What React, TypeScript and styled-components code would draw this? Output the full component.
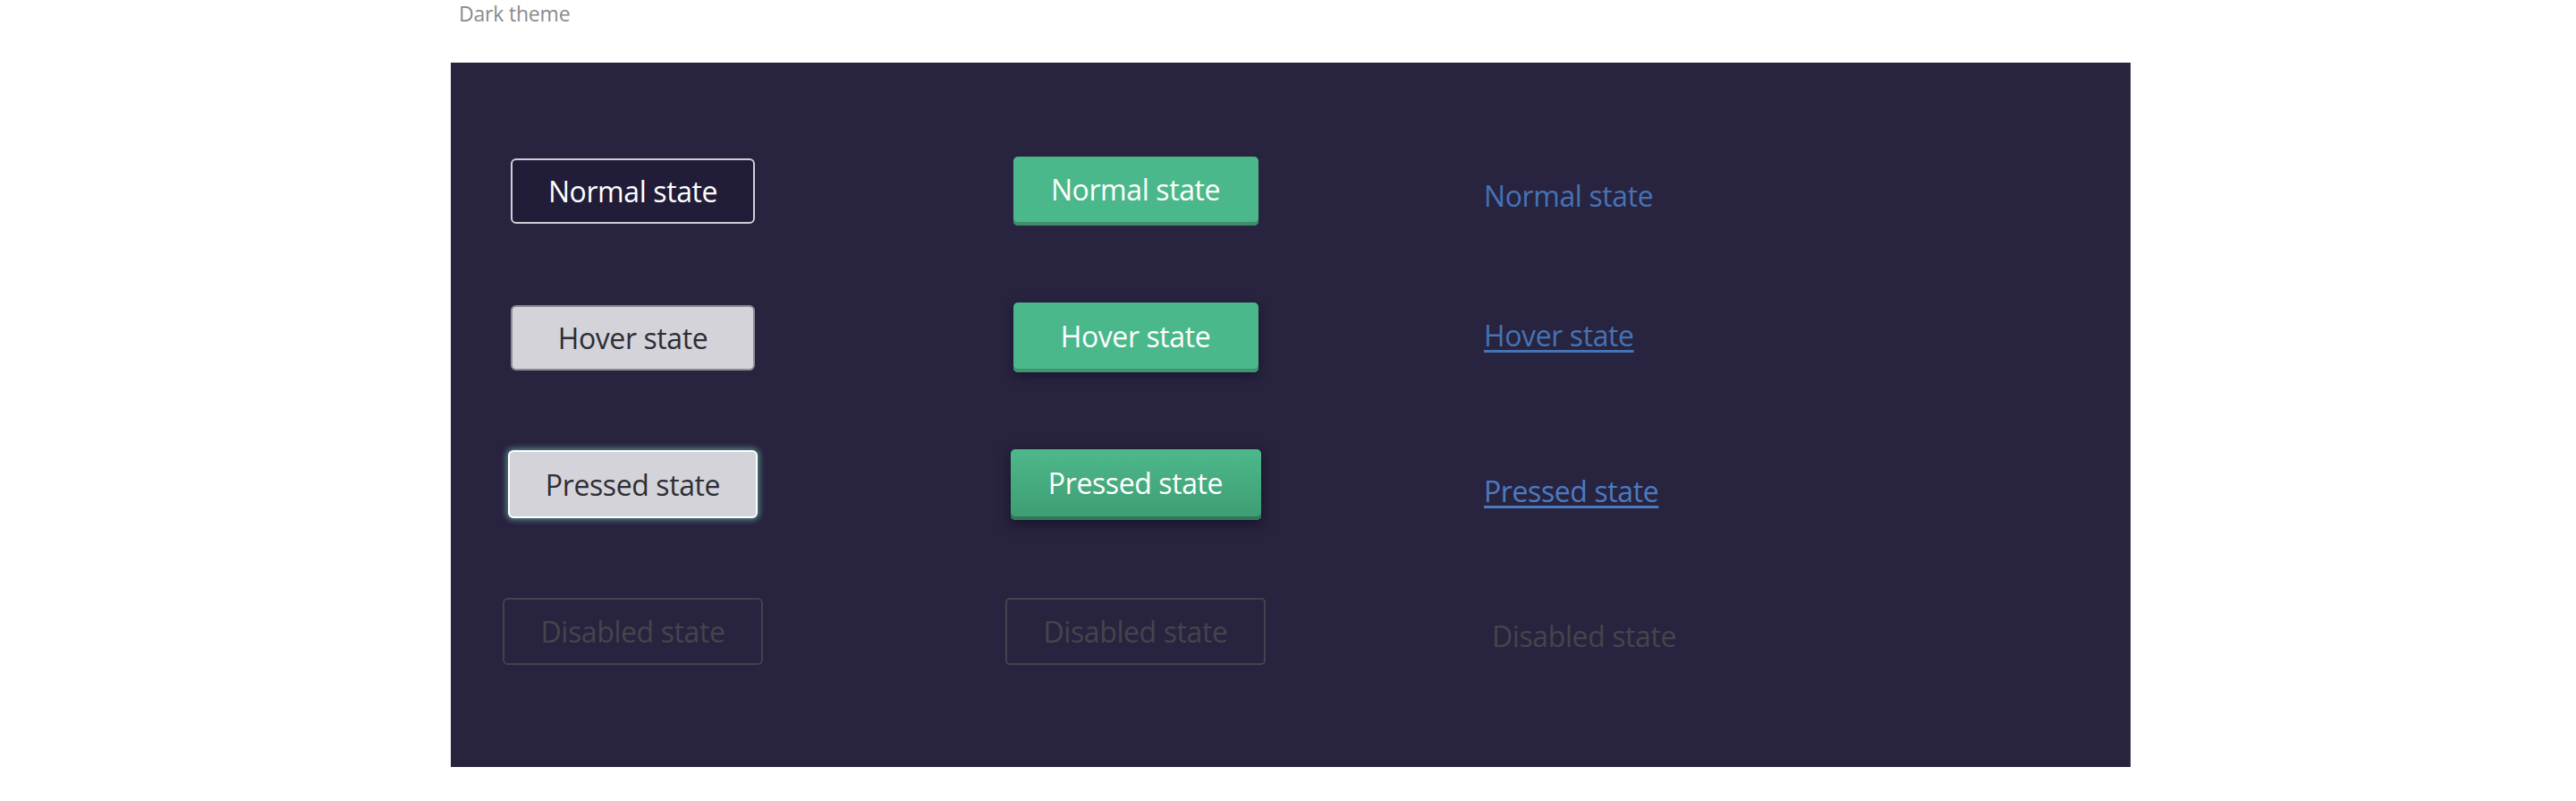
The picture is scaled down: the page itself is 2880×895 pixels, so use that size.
import React from "react";
import styled, { createGlobalStyle, css } from "styled-components";

const Global = createGlobalStyle`
  html, body { margin: 0; padding: 0; background: #ffffff; }
  body { font-family: "Open Sans", "Noto Sans", sans-serif; }
`;

const Page = styled.div`
  padding-left: 504px;
  width: 1878px;
`;

const Caption = styled.div`
  height: 70px;
  box-sizing: border-box;
  padding: 0 0 0 9px;
  font-size: 23px;
  line-height: 30px;
  color: #8b8b8b;
  letter-spacing: -0.2px;
`;

const Panel = styled.section`
  background: #28233f;
  height: 787px;
  box-sizing: border-box;
  padding: 61px 0 0 58px;
  display: grid;
  grid-template-columns: 562px 535px 1fr;
  grid-auto-rows: 164px;
  align-items: center;
`;

const Slot = styled.div`
  width: 291px;
  display: flex;
  justify-content: center;
  align-items: center;
`;

type Variant = "normal" | "hover" | "pressed" | "disabled";

const baseBtn = css`
  box-sizing: border-box;
  display: flex;
  align-items: center;
  justify-content: center;
  font-family: "Open Sans", "Noto Sans", sans-serif;
  font-size: 32px;
  font-weight: 400;
  letter-spacing: -0.4px;
  cursor: pointer;
`;

const OutlineButton = styled.button<{ $v: Variant }>`
  ${baseBtn}
  width: 273px;
  height: 73px;
  border-radius: 6px;
  border: 2px solid #cfced6;
  background: #211d38;
  color: #ffffff;
  ${(p) =>
    p.$v === "hover" &&
    css`
      background: #d4d3da;
      border-color: #8e8d95;
      color: #2e2e33;
    `}
  ${(p) =>
    p.$v === "pressed" &&
    css`
      width: 279px;
      height: 76px;
      background: #d4d3da;
      border-color: #ffffff;
      color: #2e2e33;
      box-shadow: 0 0 6px 2px rgba(120, 220, 190, 0.55);
    `}
  ${(p) =>
    p.$v === "disabled" &&
    css`
      width: 291px;
      height: 75px;
      background: transparent;
      border-color: #45424c;
      color: #46444b;
      cursor: default;
    `}
`;

const SolidButton = styled.button<{ $v: Variant }>`
  ${baseBtn}
  width: 274px;
  height: 77px;
  padding-bottom: 4px;
  border: none;
  border-radius: 5px;
  background: #4ab88a;
  color: #ffffff;
  box-shadow: inset 0 -4px 0 #3d8f6b;
  ${(p) =>
    p.$v === "hover" &&
    css`
      height: 78px;
      box-shadow: inset 0 -4px 0 #3f9470, 0 4px 12px rgba(10, 8, 25, 0.45);
    `}
  ${(p) =>
    p.$v === "pressed" &&
    css`
      width: 280px;
      height: 79px;
      background: linear-gradient(#4db98b, #3e9c72);
      box-shadow: inset 0 -4px 0 #2f7a58, 0 4px 14px rgba(10, 8, 25, 0.55);
    `}
  ${(p) =>
    p.$v === "disabled" &&
    css`
      width: 291px;
      height: 75px;
      padding-bottom: 0;
      background: transparent;
      border: 2px solid #45424c;
      color: #46444b;
      box-shadow: none;
      cursor: default;
    `}
`;

const LinkText = styled.a<{ $v: Variant }>`
  justify-self: start;
  font-family: "Open Sans", "Noto Sans", sans-serif;
  font-size: 32px;
  letter-spacing: -0.4px;
  color: #4673b5;
  text-decoration: none;
  text-underline-offset: 4px;
  text-decoration-thickness: 2px;
  cursor: pointer;
  margin-top: 10px;
  ${(p) =>
    p.$v === "hover" &&
    css`
      margin-top: -6px;
      text-decoration: underline;
    `}
  ${(p) =>
    p.$v === "pressed" &&
    css`
      margin-top: 14px;
      color: #4c7bc0;
      text-decoration: underline;
    `}
  ${(p) =>
    p.$v === "disabled" &&
    css`
      margin-top: 10px;
      margin-left: 9px;
      color: #46444b;
      cursor: default;
    `}
`;

const rows: { v: Variant; label: string }[] = [
  { v: "normal", label: "Normal state" },
  { v: "hover", label: "Hover state" },
  { v: "pressed", label: "Pressed state" },
  { v: "disabled", label: "Disabled state" },
];

export default function App() {
  return (
    <>
      <Global />
      <Page>
        <Caption>Dark theme</Caption>
        <Panel>
          {rows.map((r) => (
            <React.Fragment key={r.v}>
              <Slot>
                <OutlineButton $v={r.v} disabled={r.v === "disabled"}>
                  {r.label}
                </OutlineButton>
              </Slot>
              <Slot>
                <SolidButton $v={r.v} disabled={r.v === "disabled"}>
                  {r.label}
                </SolidButton>
              </Slot>
              <LinkText $v={r.v}>{r.label}</LinkText>
            </React.Fragment>
          ))}
        </Panel>
      </Page>
    </>
  );
}
